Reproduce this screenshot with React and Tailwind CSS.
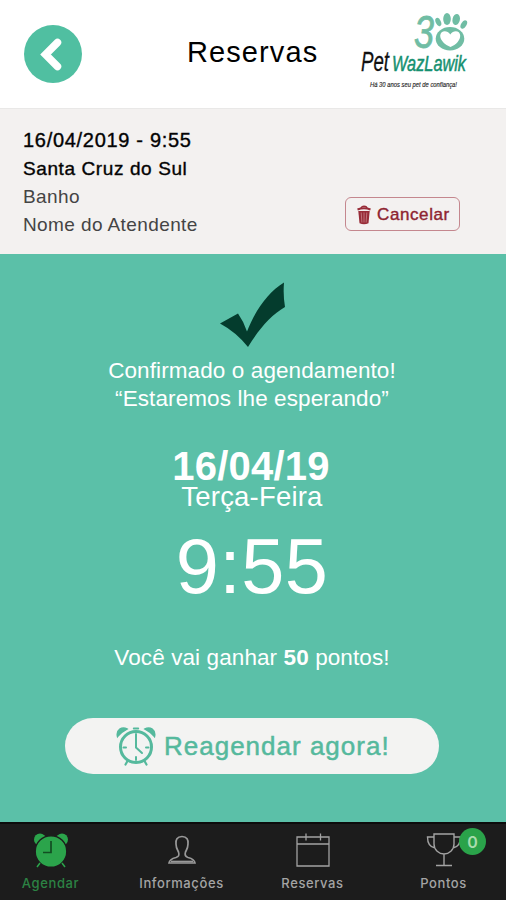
function BackButton() {
  return (
    <button aria-label="Voltar" className="flex h-[58px] w-[58px] items-center justify-center rounded-full bg-[#50bfa1]">
      <svg viewBox="0 0 58 58" className="h-full w-full" fill="none" stroke="#fff" strokeWidth="7.5" strokeLinecap="round" strokeLinejoin="miter">
        <path d="M33.5 17.5 21.5 29.5 33.5 41.5" />
      </svg>
    </button>
  )
}

function Logo() {
  return (
    <svg viewBox="0 0 116 86" className="h-[86px] w-[116px] overflow-visible" fontFamily="'Liberation Sans', Arial, sans-serif">
      <text x="54" y="42" fontSize="46" fontStyle="italic" fill="#70bda4" stroke="#70bda4" strokeWidth="0.8" textLength="20" lengthAdjust="spacingAndGlyphs">3</text>
      <g fill="#70bda4">
        <ellipse cx="78.3" cy="16" rx="2.6" ry="4.3" transform="rotate(-25 78.3 16)" />
        <ellipse cx="87" cy="13" rx="3.8" ry="6" />
        <ellipse cx="96.2" cy="13.5" rx="3.7" ry="5.6" transform="rotate(12 96.2 13.5)" />
        <ellipse cx="103.8" cy="18.5" rx="2.7" ry="4.6" transform="rotate(30 103.8 18.5)" />
        <ellipse cx="90" cy="32.8" rx="14.3" ry="11.7" />
      </g>
      <path d="M90.500 41C85 39 80 34 80.200 29.500C80.600 24.500 87 23.500 90.300 28.500C93.500 23.500 100 24.500 100.200 29.500C100.400 34 96 39 90.500 41Z" fill="#fff" />
      <text x="1" y="65" fontSize="27" fontStyle="italic" fill="#111" stroke="#111" strokeWidth="0.300" textLength="28" lengthAdjust="spacingAndGlyphs">Pet</text>
      <text x="32" y="64.500" fontSize="22" fontStyle="italic" fill="#159070" stroke="#159070" strokeWidth="0.500" textLength="74" lengthAdjust="spacingAndGlyphs">WazLawik</text>
      <text x="10" y="81" fontSize="8" fontStyle="italic" fill="#222" stroke="#222" strokeWidth="0.150" textLength="87" lengthAdjust="spacingAndGlyphs">Há 30 anos seu pet de confiança!</text>
    </svg>
  )
}

function TrashIcon() {
  return (
    <svg viewBox="0 0 16 20" className="h-5 w-4" fill="none" stroke="#982c38">
      <path d="M5 3.500C5 .500 11 .500 11 3.500" strokeWidth="1.300" />
      <path d="M1.500 4.500Q8 2 14.500 4.500" strokeWidth="2" />
      <path d="M2.300 6 3.500 18.300Q8 20 12.500 18.300L13.700 6Z" fill="#982c38" stroke="none" />
      <path d="M5.200 7.500 5.900 17.500M8 7.500V17.500M10.800 7.500 10.100 17.500" stroke="#cf9095" strokeWidth=".7" />
    </svg>
  )
}

function CheckMark() {
  return (
    <svg viewBox="0 0 66 66" className="h-[66px] w-[66px]" fill="#043c2d">
      <path d="M0 41.500 18 31.500Q24 40 27 49.500C35 29 48 10 64 .500Q63 14 65 25C51 33 39 47 28 65Q16 50 0 41.500Z" />
    </svg>
  )
}

function ClockOutlineIcon() {
  return (
    <svg viewBox="0 0 40 40" className="h-10 w-10" fill="none" stroke="#55b99d" strokeLinecap="round">
      <path d="M1.500 10.500C0 4 6 0 11 3Q5 6 1.500 10.500ZM38.500 10.500C40 4 34 0 29 3Q35 6 38.500 10.500Z" fill="#55b99d" strokeWidth="1.500" />
      <circle cx="20" cy="21" r="15.500" strokeWidth="3" />
      <path d="M20 8V21.500L26 27" strokeWidth="2" />
      <path d="M7.500 21.500H10M30 21.500H32.500M20 31V34M17.800 2.500H22.200" strokeWidth="2" />
      <path d="M11.500 35 9.500 38.500M28.500 35 30.500 38.500" strokeWidth="2.200" />
    </svg>
  )
}

function ClockSolidIcon() {
  return (
    <svg viewBox="0 0 36 36" className="h-9 w-9" fill="#2ba44b">
      <circle cx="7" cy="7.500" r="6" />
      <circle cx="29" cy="7.500" r="6" />
      <circle cx="18" cy="19.500" r="15.800" stroke="#1c1c1c" strokeWidth="1.400" />
      <path d="M7 31 4 35M29 31 32 35" stroke="#2ba44b" strokeWidth="1.500" />
      <path d="M18 9V20.500H10" fill="none" stroke="#124d22" strokeWidth="1.700" />
    </svg>
  )
}

function PersonIcon() {
  return (
    <svg viewBox="0 0 28 30" className="h-[30px] w-7" fill="none" stroke="#999" strokeWidth="1.700">
      <path d="M14 1.500C9 1.500 7.500 5 8 9C8 13 9.500 15 10.500 17C11.500 20 11 21.500 8 22.500C4 23.500 1.500 24.500 1 28H27C26.500 24.500 24 23.500 20 22.500C17 21.500 16.500 20 17.500 17C18.500 15 20 13 20 9C20.500 5 19 1.500 14 1.500Z" />
      <path d="M3 26.500H25" />
    </svg>
  )
}

function CalendarIcon() {
  return (
    <svg viewBox="0 0 34 34" className="h-[34px] w-[34px]" fill="none" stroke="#a2a2a2" strokeWidth="1.300">
      <path d="M1 4H33V33H1ZM1 11H33M10 .500V7.500M24.500 .500V7.500" />
    </svg>
  )
}

function TrophyIcon() {
  return (
    <svg viewBox="0 0 36 34" className="h-[34px] w-9" fill="none" stroke="#a2a2a2" strokeWidth="1.400">
      <path d="M8 1H28V11C28 17 23 21 18 21C13 21 8 17 8 11ZM8 4H1.500C1.500 10 3.500 14 9 15M28 4H34.500C34.500 10 32.500 14 27 15M18 21V32.500M10 32.500H26" />
    </svg>
  )
}

function Tab({ label, icon, active, badge }) {
  return (
    <button className="relative flex w-[131px] shrink-0 flex-col items-center">
      <span className="flex h-9 items-center">{icon}</span>
      <span className={`mt-[6px] font-['Inter',sans-serif] text-[13px] leading-[18px] font-medium tracking-[0.6px] ${active ? 'text-[#2c8344]' : 'text-[#a4a4a4]'}`}>{label}</span>
      {badge != null && (
        <span className="absolute top-[-4px] left-[81px] flex h-[27px] w-[27px] items-center justify-center rounded-full bg-[#2aa34a] font-['Inter',sans-serif] text-[16px] font-semibold text-[#a9dcae]">{badge}</span>
      )}
    </button>
  )
}

export default function App() {
  return (
    <div className="flex h-[900px] w-[506px] flex-col overflow-hidden bg-white font-['Liberation_Sans',Arial,sans-serif] text-black">
      <header className="flex h-[108px] shrink-0 items-start bg-white pl-6">
        <div className="pt-[25px]"><BackButton /></div>
        <h1 className="ml-[105px] w-[132px] pt-[34px] text-[29px] leading-9 tracking-[1.1px] whitespace-nowrap">Reservas</h1>
        <div className="ml-[41px] pt-1.5"><Logo /></div>
      </header>

      <section className="flex h-[146px] shrink-0 justify-between border-t border-[#e9e8e7] bg-[#f3f1f0] pl-[23px]">
        <div className="pt-[17px] leading-7 whitespace-nowrap">
          <div className="text-[20px] tracking-[0.7px] [-webkit-text-stroke:0.4px_#111]">16/04/2019 - 9:55</div>
          <div className="pt-px text-[19px] tracking-[0.6px] [-webkit-text-stroke:0.4px_#111]">Santa Cruz do Sul</div>
          <div className="text-[19px] tracking-[0.4px] text-[#444]">Banho</div>
          <div className="text-[19px] leading-[27px] tracking-[0.4px] text-[#444]">Nome do Atendente</div>
        </div>
        <button className="mt-[88px] mr-[46px] flex h-[34px] w-[115px] items-center rounded-[6px] border border-[#c4878e] pt-px pl-2.5 text-[17px] tracking-[0.6px] text-[#8e2430] [-webkit-text-stroke:0.4px_#8e2430]">
          <TrashIcon />
          <span className="ml-[5px]">Cancelar</span>
        </button>
      </section>

      <main className="flex h-[568px] shrink-0 flex-col items-center bg-[#5bc0a8] pt-[28px] whitespace-nowrap text-white">
        <CheckMark />
        <p className="mt-[9px] -ml-0.5 text-center text-[22.5px] leading-7 tracking-[0.1px]">
          Confirmado o agendamento!<br />“Estaremos lhe esperando”
        </p>
        <div className="mt-[35px] -ml-1 text-[40px] leading-[36px] font-bold tracking-[0.2px]">16/04/19</div>
        <div className="-mt-[3px] -ml-0.5 text-[27.5px] leading-[32px] tracking-[0.2px]">Terça-Feira</div>
        <div className="mt-[13px] -ml-0.5 text-[77.5px] leading-[80px] tracking-[0.4px]">9:55</div>
        <p className="mt-[38px] -ml-0.5 text-[22.5px] leading-7 tracking-[0.1px]">
          Você vai ganhar <b>50</b> pontos!
        </p>
        <button className="mt-[46px] -ml-0.5 flex h-14 w-[374px] items-center rounded-full bg-[#f3f3f2] pl-[51px] text-[26px] tracking-[1px] text-[#55b99d] [-webkit-text-stroke:0.5px_#55b99d]">
          <ClockOutlineIcon />
          <span className="ml-2">Reagendar agora!</span>
        </button>
      </main>

      <nav className="flex h-[78px] shrink-0 border-t-2 border-[#0c0c0c] bg-[#1c1c1c] pt-2">
        <div className="-ml-[15px] flex">
          <Tab label="Agendar" icon={<ClockSolidIcon />} active />
          <Tab label="Informações" icon={<PersonIcon />} />
          <Tab label="Reservas" icon={<CalendarIcon />} />
          <Tab label="Pontos" icon={<TrophyIcon />} badge={0} />
        </div>
      </nav>
    </div>
  )
}
